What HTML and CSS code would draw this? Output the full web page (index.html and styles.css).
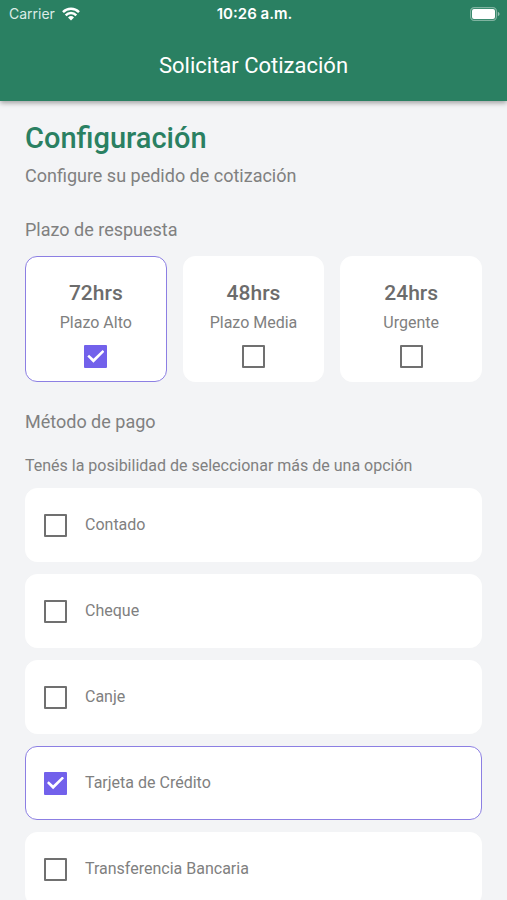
FILE: index.html
```html
<!DOCTYPE html>
<html lang="es">
<head>
<meta charset="utf-8">
<meta name="viewport" content="width=device-width, initial-scale=1">
<title>Solicitar Cotización</title>
<link rel="stylesheet" href="styles.css">
</head>
<body>
<div class="app">
  <header class="header">
    <div class="status">
      <div class="status-network">
        <span>Carrier</span>
        <svg class="wifi" viewBox="0 0 18 14" aria-hidden="true">
          <path d="M1 5.1a11.3 11.3 0 0 1 16 0M3.7 8.3a7.5 7.5 0 0 1 10.6 0" fill="none" stroke="#fff" stroke-width="2.5"/>
          <path d="M9 13.6 6 10.5a4.3 4.3 0 0 1 6 0z" fill="#fff"/>
        </svg>
      </div>
      <span class="time">10:26 a.m.</span>
      <div class="status-power">
        <svg class="battery" viewBox="0 0 30 14" aria-hidden="true">
          <rect x=".6" y=".6" width="25.8" height="12.8" rx="3.6" fill="none" stroke="#fff" stroke-opacity=".4" stroke-width="1.2"/>
          <rect x="2" y="2" width="23" height="10" rx="2" fill="#fff"/>
          <path d="M27.8 4.8c2.3 1 2.3 3.4 0 4.4z" fill="#fff" fill-opacity=".5"/>
        </svg>
      </div>
    </div>
    <div class="title">Solicitar Cotización</div>
  </header>
  <main class="content">
    <h1>Configuración</h1>
    <p class="lead">Configure su pedido de cotización</p>

    <h2 id="plazo">Plazo de respuesta</h2>
    <div class="terms" role="group" aria-labelledby="plazo">
      <label class="card term"><strong>72hrs</strong><span>Plazo Alto</span><input class="check" type="checkbox" checked></label>
      <label class="card term"><strong>48hrs</strong><span>Plazo Media</span><input class="check" type="checkbox"></label>
      <label class="card term"><strong>24hrs</strong><span>Urgente</span><input class="check" type="checkbox"></label>
    </div>

    <h2 id="pago">Método de pago</h2>
    <p class="hint">Tenés la posibilidad de seleccionar más de una opción</p>
    <div class="methods" role="group" aria-labelledby="pago">
      <label class="card method"><input class="check" type="checkbox"><span>Contado</span></label>
      <label class="card method"><input class="check" type="checkbox"><span>Cheque</span></label>
      <label class="card method"><input class="check" type="checkbox"><span>Canje</span></label>
      <label class="card method"><input class="check" type="checkbox" checked><span>Tarjeta de Crédito</span></label>
      <label class="card method"><input class="check" type="checkbox"><span>Transferencia Bancaria</span></label>
    </div>
  </main>
</div>
</body>
</html>
```
FILE: styles.css
```css
* {
  box-sizing: border-box;
}

body {
  margin: 0;
  background: #f3f4f6;
  color: #808080;
  font-family: Roboto, "Liberation Sans", sans-serif;
}

.app {
  display: flex;
  flex-direction: column;
  height: 100vh;
}

.header {
  z-index: 1;
  padding-bottom: 19px;
  background: #2a8062;
  box-shadow: 0 2px 5px rgba(0, 0, 0, 0.35);
  color: #fff;
}

.status {
  display: grid;
  grid-template-columns: 1fr auto 1fr;
  align-items: center;
  height: 28px;
  padding: 0 7px 0 9px;
  font: 14px/20px Inter, sans-serif;
}

.status-network {
  display: flex;
  align-items: center;
  gap: 7px;
  color: #dcece6;
}

.wifi {
  width: 18px;
  height: 14px;
}

.time {
  font-size: 15px;
  font-weight: 600;
}

.status-power {
  display: flex;
  justify-content: flex-end;
}

.battery {
  width: 30px;
  height: 14px;
}

.title {
  margin-top: 22px;
  font-size: 22px;
  line-height: 32px;
  text-align: center;
}

.content {
  flex: 1;
  min-height: 0;
  overflow-y: auto;
  scrollbar-width: none;
  padding: 17px 25px 24px;
}

h1,
h2,
p {
  margin: 0;
}

h1 {
  color: #2a8062;
  font-size: 29px;
  font-weight: 500;
  line-height: 40px;
}

.lead,
h2 {
  font-size: 18px;
  font-weight: 400;
  line-height: 36px;
}

h2 {
  margin-top: 18px;
}

.hint {
  margin: 16px 0 12px;
  font-size: 16px;
  line-height: 20px;
}

.card {
  display: flex;
  align-items: center;
  border: 1px solid #fff;
  border-radius: 12px;
  background: #fff;
  font-size: 16px;
  line-height: 24px;
}

.card:has(:checked) {
  border-color: #8c7fe3;
}

.terms {
  display: grid;
  grid-template-columns: repeat(3, 1fr);
  gap: 16px;
  margin: 8px 0 22px;
}

.term {
  flex-direction: column;
  padding: 22px 8px 13px;
}

.term strong {
  color: #6c6c6c;
  font-size: 21px;
  font-weight: 500;
  line-height: 28px;
}

.term span {
  margin: 4px 0 10px;
}

.methods {
  display: grid;
  gap: 12px;
}

.method {
  gap: 18px;
  height: 74px;
  padding: 0 18px;
}

.check {
  flex: none;
  width: 23px;
  height: 23px;
  margin: 0;
  appearance: none;
  border: 2px solid #707070;
  border-radius: 1px;
}

.check:checked {
  display: grid;
  place-items: center;
  border-color: #7261eb;
  background: #7261eb;
}

.check:checked::before {
  content: "";
  width: 17px;
  height: 13px;
  background: #fff;
  clip-path: polygon(0 50%, 10% 36%, 36% 68%, 90% 0, 100% 14%, 36% 98%);
}
```
